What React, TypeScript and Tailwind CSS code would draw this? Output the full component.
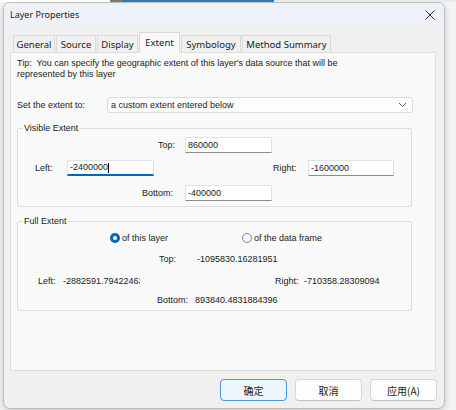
import React from "react";

const TABS = [
  { label: "General", w: "w-[42px]" },
  { label: "Source", w: "w-[40px]" },
  { label: "Display", w: "w-[41px]" },
  { label: "Extent", w: "w-[41px]", active: true },
  { label: "Symbology", w: "w-[60px]" },
  { label: "Method Summary", w: "w-[89px]" },
];

function Input({ value, className, focused }: { value: string; className: string; focused?: boolean }) {
  return (
    <div
      className={`h-[16px] bg-white border border-[#e2e2e2] flex items-center pl-[2px] ${
        focused ? "border-b-2 border-b-[#0067c0]" : "border-b-[#8d8d8d]"
      } ${className}`}
    >
      <span>{value}</span>
      {focused && <span className="w-px h-[10px] bg-black" />}
    </div>
  );
}

function Radio({ checked, label }: { checked?: boolean; label: string }) {
  return (
    <div className="flex items-center gap-[2px]">
      {checked ? (
        <span className="w-[10px] h-[10px] rounded-full bg-[#0067c0] flex items-center justify-center">
          <span className="w-[4px] h-[4px] rounded-full bg-white" />
        </span>
      ) : (
        <span className="w-[10px] h-[10px] rounded-full border border-[#868686] bg-[#f7f7f7]" />
      )}
      <span>{label}</span>
    </div>
  );
}

export default function App() {
  return (
    <div className="w-[456px] h-[410px] bg-[#f4f4f4] overflow-hidden font-['Liberation_Sans',Arial,sans-serif] text-[9px] leading-[11px] text-[#1b1b1b]">
      {/* sliver of the map window behind */}
      <div className="flex h-[2px]">
        <div className="w-[110px] bg-white" />
        <div className="w-[12px] bg-[#7a7a7a]" />
        <div className="w-[152px] bg-[#2b7cc0]" />
        <div className="flex-1 bg-[#e9e9e9]" />
      </div>

      <div className="ml-[3px] w-[442px] h-[407px] rounded-[7px] border border-[#bdbdbd] bg-[#f0f0f0] shadow-[0_2px_6px_rgba(0,0,0,0.18)] overflow-hidden flex flex-col">
        {/* title bar */}
        <div className="h-[23px] shrink-0 bg-[#eef2f8] flex items-center justify-between pl-[6px] pr-[9px] font-['Noto_Sans',sans-serif] text-[9px] text-[#1a1a1a]">
          <span>Layer Properties</span>
          <svg width="10" height="10" viewBox="0 0 10 10">
            <path d="M0.5 0.5 L9.5 9.5 M9.5 0.5 L0.5 9.5" stroke="#303030" strokeWidth="1" />
          </svg>
        </div>

        {/* tabs */}
        <div className="mt-[6px] ml-[9px] h-[20px] flex items-end gap-px font-['Noto_Sans',sans-serif] text-[9.5px] relative z-10">
          {TABS.map((t) =>
            t.active ? (
              <div
                key={t.label}
                className={`${t.w} h-[21px] -mb-px bg-[#f9f9f9] border border-b-0 border-[#d9d9d9] flex items-center justify-center pb-[2px]`}
              >
                {t.label}
              </div>
            ) : (
              <div
                key={t.label}
                className={`${t.w} h-[17px] bg-[#f0f0f0] border border-b-0 border-[#dadada] flex items-center justify-center`}
              >
                {t.label}
              </div>
            )
          )}
        </div>

        {/* tab page */}
        <div className="ml-[6px] w-[426px] h-[319px] shrink-0 bg-[#f9f9f9] border border-[#dcdcdc]">
          <p className="pl-[6px] pt-[5px]">
            Tip:&nbsp; You can specify the geographic extent of this layer's data source that will be
            <br />
            represented by this layer
          </p>

          <div className="mt-[17px] pl-[6px] flex items-center h-[16px]">
            <span className="w-[90px]">Set the extent to:</span>
            <div className="w-[306px] h-[16px] bg-[#fdfdfd] border border-[#dcdcdc] rounded-[3px] flex items-center justify-between pl-[3px] pr-[5px]">
              <span>a custom extent entered below</span>
              <svg width="9" height="6" viewBox="0 0 9 6">
                <polyline points="1,1 4.5,4.5 8,1" fill="none" stroke="#606060" strokeWidth="1" />
              </svg>
            </div>
          </div>

          <fieldset className="mt-[10px] ml-[6px] w-[395px] border border-[#dcdcdc] rounded-[2px] pt-[3px] pb-[5px]">
            <legend className="ml-[5px] px-[1px] leading-[11px]">Visible Extent</legend>
            <div className="flex items-center h-[16px]">
              <span className="w-[157px] text-right">Top:</span>
              <Input value="860000" className="ml-[10px] w-[87px]" />
            </div>
            <div className="mt-[7px] flex items-center h-[16px]">
              <span className="ml-[17px] w-[32px]">Left:</span>
              <Input value="-2400000" className="w-[87px]" focused />
              <span className="ml-[119px] w-[35px]">Right:</span>
              <Input value="-1600000" className="w-[86px]" />
            </div>
            <div className="mt-[9px] flex items-center h-[16px]">
              <span className="w-[155px] text-right">Bottom:</span>
              <Input value="-400000" className="ml-[12px] w-[87px]" />
            </div>
          </fieldset>

          <fieldset className="mt-[9px] ml-[6px] w-[395px] border border-[#dcdcdc] rounded-[2px] pt-[5px] pb-[4px]">
            <legend className="ml-[5px] px-[1px] leading-[11px]">Full Extent</legend>
            <div className="flex items-center h-[12px]">
              <div className="ml-[92px] w-[132px]">
                <Radio checked label="of this layer" />
              </div>
              <Radio label="of the data frame" />
            </div>
            <div className="mt-[9px] flex items-center h-[12px]">
              <span className="ml-[141px] w-[38px]">Top:</span>
              <span>-1095830.16281951</span>
            </div>
            <div className="mt-[10px] flex items-center h-[12px]">
              <span className="ml-[20px] w-[25px]">Left:</span>
              <span className="w-[77px] overflow-hidden whitespace-nowrap">-2882591.79422463</span>
              <span className="ml-[135px] w-[29px]">Right:</span>
              <span className="w-[76px] overflow-hidden whitespace-nowrap">-710358.283090942</span>
            </div>
            <div className="mt-[7px] flex items-center h-[12px]">
              <span className="ml-[139px] w-[38px]">Bottom:</span>
              <span>893840.4831884396</span>
            </div>
          </fieldset>
        </div>

        {/* dialog buttons */}
        <div className="mt-[8px] pr-[7px] flex justify-end gap-[8px] font-['Noto_Sans_CJK_SC',sans-serif] text-[10px]">
          <button className="w-[67px] h-[22px] rounded-[4px] border border-[#4b95dd] bg-[#eef5fc]">确定</button>
          <button className="w-[67px] h-[22px] rounded-[4px] border border-[#d6d6d6] border-b-[#c2c2c2] bg-[#fdfdfd]">取消</button>
          <button className="w-[67px] h-[22px] rounded-[4px] border border-[#d6d6d6] border-b-[#c2c2c2] bg-[#fdfdfd]">应用(A)</button>
        </div>
      </div>
    </div>
  );
}
